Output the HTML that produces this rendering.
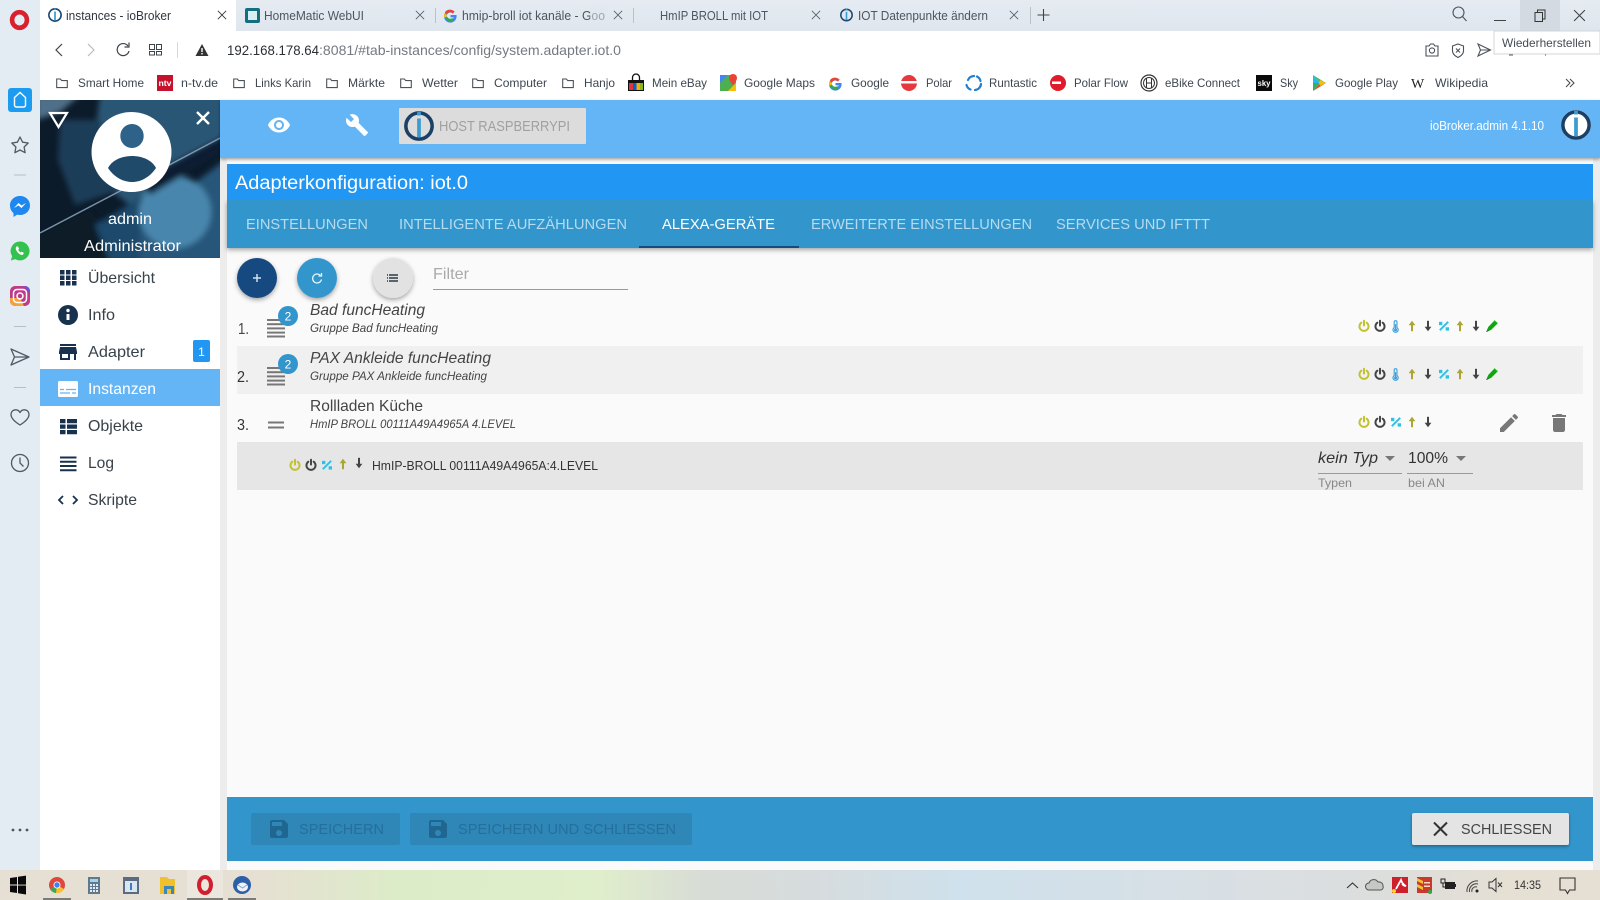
<!DOCTYPE html>
<html lang="de"><head><meta charset="utf-8"><title>instances - ioBroker</title>
<style>
html,body{margin:0;padding:0;width:1600px;height:900px;overflow:hidden;background:#fafafa}
svg{display:block;position:absolute;left:0;top:0}
text{font-family:"Liberation Sans",sans-serif;dominant-baseline:auto;white-space:pre}
.t{font-size:12.5px;fill:#4c5560}
.b{font-size:12px;fill:#3d4650}
.m{font-size:16px;fill:#38424a}
.tab{font-size:15px;fill:#b4dbef}
</style></head><body>
<svg width="1600" height="900" viewBox="0 0 1600 900" xmlns="http://www.w3.org/2000/svg">
<defs>
<linearGradient id="tb" x1="0" x2="0" y1="0" y2="1"><stop offset="0" stop-color="#e6ebf2"/><stop offset="1" stop-color="#dfe6ee"/></linearGradient>
<linearGradient id="task" x1="0" x2="1" y1="0" y2="0">
<stop offset="0" stop-color="#e6dfd3"/><stop offset=".155" stop-color="#e6dfd3"/><stop offset=".25" stop-color="#dcecc8"/><stop offset=".37" stop-color="#e0efcb"/><stop offset=".44" stop-color="#d8dcd6"/><stop offset=".51" stop-color="#d6dcde"/><stop offset=".6" stop-color="#cfe1ec"/><stop offset=".78" stop-color="#d9dfe3"/><stop offset=".86" stop-color="#dcdedd"/><stop offset=".95" stop-color="#e6dfd3"/><stop offset="1" stop-color="#e6dfd3"/></linearGradient>
<filter id="sh" x="-30%" y="-30%" width="160%" height="170%"><feDropShadow dx="0" dy="2" stdDeviation="2.5" flood-color="#000" flood-opacity=".35"/></filter>
<filter id="sh2" x="-5%" y="-30%" width="110%" height="170%"><feDropShadow dx="0" dy="1.5" stdDeviation="1.5" flood-color="#000" flood-opacity=".35"/></filter>
<filter id="bl" x="-10%" y="-10%" width="120%" height="120%"><feGaussianBlur stdDeviation="3"/></filter>
<clipPath id="hc"><rect x="40" y="100" width="180" height="158"/></clipPath>
<symbol id="pw" viewBox="0 0 14 14" overflow="visible"><path d="M3.9 3.1A5.3 5.3 0 1 0 10.1 3.1M7 .8v5.700" fill="none" stroke="currentColor" stroke-width="2.3" stroke-linecap="round"/></symbol>
<symbol id="up" viewBox="0 0 10 14" overflow="visible"><path d="M5 3v10.500" stroke="currentColor" stroke-width="2.500" fill="none"/><path d="M.8 6L5 .5 9.200 6z" fill="currentColor"/></symbol>
<symbol id="dn" viewBox="0 0 10 14" overflow="visible"><path d="M5 .5v10.500" stroke="currentColor" stroke-width="2.500" fill="none"/><path d="M.8 8L5 13.500 9.200 8z" fill="currentColor"/></symbol>
<symbol id="pc" viewBox="0 0 12 12" overflow="visible"><path d="M11 1L1 11" stroke="#2fc0e6" stroke-width="2.300" fill="none"/><rect x="0" y="1" width="4" height="4" fill="#2fc0e6"/><rect x="8" y="7.500" width="4" height="4" fill="#2fc0e6"/></symbol>
<symbol id="th" viewBox="0 0 10 16" overflow="visible"><path d="M3.400 9.200V2.600a1.700 1.700 0 0 1 3.400 0v6.600a3.200 3.200 0 1 1-3.400 0z" fill="none" stroke="#3aa3dd" stroke-width="1.400"/><circle cx="5.100" cy="12" r="1.900" fill="#3aa3dd"/><path d="M5.100 5v6" stroke="#3aa3dd" stroke-width="1.400"/></symbol>
<symbol id="pen" viewBox="0 0 14 14" overflow="visible"><path d="M0.200 14L2.600 8.200L9.600 .9L13.300 4.200L6 11.500z" fill="#0fa50f"/><path d="M.6 13.600L3.200 12" stroke="#0a7a0a" stroke-width="1"/><path d="M10 .2l3.900 3.500-.8.8-3.900-3.500z" fill="#1dc41d"/></symbol>
<symbol id="folder" viewBox="0 0 12 12" overflow="visible"><path d="M.7 2h3.700l1.300 1.600h5.600v7H.7z" fill="none" stroke="#4a525a" stroke-width="1.100"/></symbol>
<symbol id="x" viewBox="0 0 12 12" overflow="visible"><path d="M1 1L11 11M11 1L1 11" stroke="currentColor" stroke-width="1" fill="none"/></symbol>
<symbol id="io" viewBox="0 0 32 32" overflow="visible"><circle cx="16" cy="16" r="14" fill="none" stroke="currentColor" stroke-width="3.800"/><rect x="14" y="0.800" width="4" height="4" fill="#3d9ccf"/><rect x="14" y="8" width="4" height="20" fill="#3d9ccf"/></symbol>
<g id="gg"><path d="M456.500 15h-6v2.400h3.300a3.700 3.700 0 1 1-1-3.900l1.800-1.800a6.300 6.300 0 1 0 2 4.800z" fill="#4285f4"/><path d="M444.800 12.300l2.200 1.600a3.700 3.700 0 0 1 5.800-.4l1.800-1.800a6.300 6.300 0 0 0-9.800.6z" fill="#ea4335"/><path d="M444.800 18.200l2.200-1.600a3.700 3.700 0 0 0 5.400 1.500l1.800 1.600a6.300 6.300 0 0 1-9.400-1.500z" fill="#34a853"/><path d="M444.500 13.200l2.400 1.500-.1 1.700-2.300 1.600a6.300 6.300 0 0 1 0-4.800z" fill="#fbbc05"/></g>
<path id="savep" d="M17 3H5c-1.110 0-2 .9-2 2v14c0 1.100.89 2 2 2h14c1.100 0 2-.9 2-2V7l-4-4zm-5 16c-1.660 0-3-1.340-3-3s1.340-3 3-3 3 1.340 3 3-1.340 3-3 3zm3-10H5V5h10v4z"/>
</defs>

<rect width="1600" height="900" fill="#fafafa"/>

<!-- Opera sidebar -->
<rect x="0" y="0" width="40" height="870" fill="#e3ebf3"/>
<ellipse cx="19.500" cy="20" rx="7.400" ry="7.800" fill="none" stroke="#d9202f" stroke-width="4.600"/>
<rect x="8" y="88" width="24" height="24" rx="3" fill="#1c9cf0"/>
<path d="M14.500 97.500L20 92.500L25.500 97.500V105Q25.500 107 23.500 107H16.500Q14.500 107 14.500 105Z" fill="none" stroke="#fff" stroke-width="1.400"/>
<path d="M20 137l2.600 5.200 5.600.8-4.100 4 1 5.700-5.100-2.700-5.100 2.700 1-5.700-4.100-4 5.600-.8z" fill="none" stroke="#505a64" stroke-width="1.300" stroke-linejoin="round"/>
<rect x="14" y="174.500" width="12" height="1" fill="#b5bdc6"/>
<path d="M20 196c5.600 0 10 4 10 9.500s-4.400 9.500-10 9.500c-1 0-2-.1-2.900-.4L13.500 217v-3.900C11.400 211.400 10 208.700 10 205.500 10 200 14.400 196 20 196z" fill="#1e88f0"/>
<path d="M14 208l4.500-5 3 2.500 4.500-2.500-4.500 5-3-2.500z" fill="#fff"/>
<path d="M20 241.500a9.500 9.500 0 0 1 8.200 14.300a9.500 9.500 0 0 1-13 3.300L10.800 260.500l1.400-4.300A9.500 9.500 0 0 1 20 241.500z" fill="#32c24d"/>
<path d="M16.500 246.500c-1 1-1.200 3 .8 5.500s4.200 3.300 5.400 2.800l1.300-1.800-2.300-1.400-1 .9c-1-.4-2-1.500-2.500-2.700l.9-1-1.200-2.400z" fill="#fff"/>
<rect x="10" y="286" width="20" height="20" rx="5" fill="#c13a8a"/>
<path d="M10 298v3a5 5 0 0 0 5 5h9l-4-8z" fill="#f5a13c"/>
<path d="M15 286h10a5 5 0 0 1 5 5v3l-6-8z" fill="#6a56c9"/>
<rect x="13.500" y="289.500" width="13" height="13" rx="3.500" fill="none" stroke="#fff" stroke-width="1.500"/><circle cx="20" cy="296" r="3" fill="none" stroke="#fff" stroke-width="1.500"/>
<rect x="14" y="326" width="12" height="1" fill="#b5bdc6"/>
<path d="M11 349l18 8-18 8 3.500-8zM14.500 357H29" fill="none" stroke="#505a64" stroke-width="1.300" stroke-linejoin="round"/>
<rect x="14" y="387" width="12" height="1" fill="#b5bdc6"/>
<path d="M20 425c-8-5-9-8.500-9-10.500 0-5 6.500-6.500 9-2 2.500-4.500 9-3 9 2 0 2-1 5.500-9 10.500z" fill="none" stroke="#505a64" stroke-width="1.300" stroke-linejoin="round"/>
<circle cx="20" cy="463" r="8.500" fill="none" stroke="#505a64" stroke-width="1.300"/><path d="M20 457.500V463l3.500 3.500" fill="none" stroke="#505a64" stroke-width="1.300"/>
<circle cx="13" cy="830" r="1.400" fill="#4b5560"/><circle cx="20" cy="830" r="1.400" fill="#4b5560"/><circle cx="27" cy="830" r="1.400" fill="#4b5560"/>

<!-- Tab bar -->
<rect x="40" y="0" width="1560" height="31" fill="url(#tb)"/>
<rect x="1520" y="0" width="40" height="31" fill="#d3dae2"/>
<rect x="40" y="0" width="196" height="31" fill="#fff"/>
<use href="#io" x="48" y="8" width="14" height="14" color="#1d4a76"/>
<text x="66" y="20" class="t" style="fill:#30373e" textLength="105" lengthAdjust="spacingAndGlyphs">instances - ioBroker</text>
<use href="#x" x="217" y="10" width="10" height="10" color="#333"/>
<rect x="245" y="8" width="15" height="15" rx="2" fill="#136f80"/><rect x="248" y="11" width="9" height="9" fill="#d9eef0"/>
<text x="264" y="20" class="t" textLength="100" lengthAdjust="spacingAndGlyphs">HomeMatic WebUI</text>
<use href="#x" x="415" y="10" width="10" height="10" color="#56606a"/>
<rect x="435" y="8" width="1" height="15" fill="#b9c1ca"/>
<use href="#gg"/>
<text x="462" y="20" class="t" textLength="143" lengthAdjust="spacingAndGlyphs">hmip-broll iot kanäle - Goo</text>
<rect x="590" y="6" width="18" height="20" fill="#e2e8ef" opacity=".55"/>
<use href="#x" x="613" y="10" width="10" height="10" color="#56606a"/>
<rect x="633" y="8" width="1" height="15" fill="#b9c1ca"/>
<text x="660" y="20" class="t" textLength="108" lengthAdjust="spacingAndGlyphs">HmIP BROLL mit IOT</text>
<use href="#x" x="811" y="10" width="10" height="10" color="#56606a"/>
<use href="#io" x="840" y="8" width="13" height="14" color="#1d4a76"/>
<text x="858" y="20" class="t" textLength="130" lengthAdjust="spacingAndGlyphs">IOT Datenpunkte ändern</text>
<use href="#x" x="1009" y="10" width="10" height="10" color="#56606a"/>
<rect x="1030" y="7" width="1" height="17" fill="#b9c1ca"/>
<path d="M1043.500 9v12M1037.500 15h12" stroke="#444" stroke-width="1.100"/>
<circle cx="1458.500" cy="12.500" r="5.500" fill="none" stroke="#4a525a" stroke-width="1.100"/><path d="M1462.500 16.500l4 4.500" stroke="#4a525a" stroke-width="1.100"/>
<rect x="1494" y="20" width="12" height="1" fill="#444"/>
<path d="M1535 12.500h7.500v9H1535zM1537.500 12.500V10h7.500v9h-2.500" fill="none" stroke="#333" stroke-width="1"/>
<use href="#x" x="1573" y="9" width="13" height="13" color="#444"/>

<!-- Address bar -->
<rect x="40" y="31" width="1560" height="69" fill="#fff"/>
<path d="M62 44l-6 6 6 6" fill="none" stroke="#3c444c" stroke-width="1.200"/>
<path d="M88 44l6 6-6 6" fill="none" stroke="#b5bbc2" stroke-width="1.200"/>
<path d="M128 46a6 6 0 1 0 1 5" fill="none" stroke="#3c444c" stroke-width="1.200"/><path d="M129 42.500v4.500h-4.500" fill="none" stroke="#3c444c" stroke-width="1.200"/>
<g fill="none" stroke="#3c444c" stroke-width="1"><rect x="149.500" y="44.500" width="5" height="5"/><rect x="156.500" y="44.500" width="5" height="5"/><rect x="149.500" y="51.500" width="5" height="3.500"/><rect x="156.500" y="51.500" width="5" height="3.500"/></g>
<rect x="177" y="42" width="1" height="16" fill="#d5d9de"/>
<path d="M202 44l6.500 12h-13z" fill="#333"/><rect x="201.300" y="48" width="1.400" height="4" fill="#fff"/><rect x="201.300" y="53" width="1.400" height="1.400" fill="#fff"/>
<text x="227" y="55" font-size="14" fill="#2b3036" textLength="92" lengthAdjust="spacingAndGlyphs">192.168.178.64</text>
<text x="319" y="55" font-size="14" fill="#737a82" textLength="302" lengthAdjust="spacingAndGlyphs">:8081/#tab-instances/config/system.adapter.iot.0</text>
<g fill="none" stroke="#4a525a" stroke-width="1.100">
<path d="M1426 46h3l1.500-2h3l1.500 2h3v10h-12z"/><circle cx="1432" cy="50.500" r="2.600"/>
<path d="M1458 44l5.500 2v5c0 3-2.500 5-5.500 6.500-3-1.500-5.500-3.500-5.500-6.500v-5z"/><path d="M1456 48.500l4 4M1460 48.500l-4 4"/>
<path d="M1478 44l12.500 6-12.500 6 2.500-6zM1480.500 50h10"/></g>
<rect x="1494" y="31" width="106" height="23" fill="#fff" stroke="#d0d4d8" stroke-width="1"/>
<text x="1502" y="47" font-size="12" fill="#444c54" textLength="89" lengthAdjust="spacingAndGlyphs">Wiederherstellen</text>
<path d="M1509 55h4M1545 55h1" stroke="#555"/>

<!-- Bookmarks -->
<use href="#folder" x="56" y="77" width="12" height="12"/>
<text x="78" y="87" class="b" textLength="66" lengthAdjust="spacingAndGlyphs">Smart Home</text>
<rect x="157" y="75" width="16" height="16" fill="#c5112c"/><text x="158.500" y="86" font-size="8" font-weight="700" fill="#fff" textLength="13" lengthAdjust="spacingAndGlyphs">ntv</text>
<text x="181" y="87" class="b" textLength="37" lengthAdjust="spacingAndGlyphs">n-tv.de</text>
<use href="#folder" x="233" y="77" width="12" height="12"/>
<text x="255" y="87" class="b" textLength="56" lengthAdjust="spacingAndGlyphs">Links Karin</text>
<use href="#folder" x="326" y="77" width="12" height="12"/>
<text x="348" y="87" class="b" textLength="37" lengthAdjust="spacingAndGlyphs">Märkte</text>
<use href="#folder" x="400" y="77" width="12" height="12"/>
<text x="422" y="87" class="b" textLength="36" lengthAdjust="spacingAndGlyphs">Wetter</text>
<use href="#folder" x="472" y="77" width="12" height="12"/>
<text x="494" y="87" class="b" textLength="53" lengthAdjust="spacingAndGlyphs">Computer</text>
<use href="#folder" x="562" y="77" width="12" height="12"/>
<text x="584" y="87" class="b" textLength="31" lengthAdjust="spacingAndGlyphs">Hanjo</text>
<path d="M628 80h16v11h-16z" fill="#111"/><rect x="629" y="83" width="4" height="7" fill="#e53238"/><rect x="633" y="83" width="3.500" height="7" fill="#0064d2"/><rect x="636.500" y="83" width="3.500" height="7" fill="#f5af02"/><rect x="640" y="83" width="3" height="7" fill="#86b817"/><path d="M632.500 80v-2.500a3.500 3.500 0 0 1 7 0V80" fill="none" stroke="#111" stroke-width="1.300"/>
<text x="652" y="87" class="b" textLength="55" lengthAdjust="spacingAndGlyphs">Mein eBay</text>
<rect x="720" y="75" width="16" height="16" fill="#4caf50"/><path d="M720 75h8l-8 8z" fill="#4285f4"/><path d="M736 75v8l-8 8h8z" fill="#fbbc05"/><path d="M733 74a4 4 0 0 0-4 4c0 3 4 7 4 7s4-4 4-7a4 4 0 0 0-4-4z" fill="#ea4335"/>
<text x="744" y="87" class="b" textLength="71" lengthAdjust="spacingAndGlyphs">Google Maps</text>
<use href="#gg" x="385" y="68"/>
<text x="851" y="87" class="b" textLength="38" lengthAdjust="spacingAndGlyphs">Google</text>
<circle cx="909" cy="83" r="8" fill="#e5383f"/><rect x="901" y="81" width="16" height="2.500" fill="#fff"/>
<text x="926" y="87" class="b" textLength="26" lengthAdjust="spacingAndGlyphs">Polar</text>
<path d="M968 80a6.500 6.500 0 0 1 6-4M981 84a6.500 6.500 0 0 1-6 6M966.500 85a6.500 6.500 0 0 0 4 4.500M977 76.500a6.500 6.500 0 0 1 3.500 4.500" fill="none" stroke="#1f7fd1" stroke-width="2.200" stroke-linecap="round"/>
<text x="989" y="87" class="b" textLength="48" lengthAdjust="spacingAndGlyphs">Runtastic</text>
<circle cx="1058" cy="83" r="8" fill="#e01b2c"/><rect x="1052" y="81.500" width="9" height="2.500" fill="#fff"/>
<text x="1074" y="87" class="b" textLength="54" lengthAdjust="spacingAndGlyphs">Polar Flow</text>
<circle cx="1149" cy="83" r="8" fill="none" stroke="#333" stroke-width="1.200"/><circle cx="1149" cy="83" r="5.500" fill="none" stroke="#333" stroke-width="1"/><path d="M1146.500 78.500v9M1151.500 78.500v9M1146.500 83h5" stroke="#333" stroke-width="1"/>
<text x="1165" y="87" class="b" textLength="75" lengthAdjust="spacingAndGlyphs">eBike Connect</text>
<rect x="1256" y="75" width="16" height="16" fill="#0a0a0a"/><text x="1257.500" y="86" font-size="8" font-weight="700" fill="#fff" textLength="13" lengthAdjust="spacingAndGlyphs">sky</text>
<text x="1280" y="87" class="b" textLength="18" lengthAdjust="spacingAndGlyphs">Sky</text>
<path d="M1313 75v8l7 0z" fill="#2bb5ee"/><path d="M1313 91v-8l7 0z" fill="#2db45c"/><path d="M1313 75l13 8h-6z" fill="#38c172"/><path d="M1313 91l13-8h-6z" fill="#ea4335"/><path d="M1320 80l6 3-6 3-1-3z" fill="#fbbc05"/>
<text x="1335" y="87" class="b" textLength="63" lengthAdjust="spacingAndGlyphs">Google Play</text>
<text x="1411" y="88" font-size="14" fill="#222" style="font-family:'Liberation Serif',serif">W</text>
<text x="1435" y="87" class="b" textLength="53" lengthAdjust="spacingAndGlyphs">Wikipedia</text>
<path d="M1566 79l4 4-4 4M1570 79l4 4-4 4" fill="none" stroke="#444" stroke-width="1"/>

<!-- Drawer -->
<rect x="40" y="100" width="180" height="770" fill="#fff"/>
<rect x="220" y="158" width="7" height="712" fill="#ececec"/>
<rect x="1593" y="158" width="7" height="712" fill="#ececec"/>
<g clip-path="url(#hc)">
<rect x="40" y="100" width="180" height="158" fill="#0c1b2a"/>
<g filter="url(#bl)">
<path d="M100 95H225V145L130 205L90 175Z" fill="#2c5676"/>
<path d="M60 120H100L120 190L75 205L58 160Z" fill="#1b3c58"/>
<path d="M36 95H80L60 112L36 120Z" fill="#4f6f88"/>
<path d="M90 262L225 160V262Z" fill="#25567a"/>
<path d="M36 262V238L90 210L130 262Z" fill="#0a1a28"/>
<path d="M95 225L140 198V262H110Z" fill="#1c4a6c"/>
<circle cx="175" cy="212" r="36" fill="#4a86ad"/>
<path d="M140 180L225 135V150L150 195Z" fill="#0d1f30"/>
</g>
<path d="M40 233L122 190L222 137" stroke="#8ea6b8" stroke-width="1.500" fill="none" opacity=".85"/>
</g>
<circle cx="131.500" cy="152" r="40" fill="#fff"/>
<ellipse cx="132" cy="136" rx="11.700" ry="12" fill="#2e6288"/>
<path d="M108 168C116 152 148 152 156 168C150 177 141 182 132 182C123 182 114 177 108 168Z" fill="#1f4a6a"/>
<path d="M50 113h17l-8.500 14z" fill="none" stroke="#fff" stroke-width="2.200"/>
<path d="M197 112l12 12M209 112l-12 12" stroke="#fff" stroke-width="2.400"/>
<text x="130" y="224" text-anchor="middle" font-size="16" fill="#fff" textLength="44" lengthAdjust="spacingAndGlyphs">admin</text>
<text x="84" y="251" font-size="16" fill="#fff" textLength="97" lengthAdjust="spacingAndGlyphs">Administrator</text>

<rect x="40" y="369" width="180" height="37" fill="#64b5f6"/>
<g fill="#18314f">
<path d="M60 270h4.500v4.500H60zM66 270h4.500v4.500H66zM72 270h4.500v4.500H72zM60 275.500h4.500v4.500H60zM66 275.500h4.500v4.500H66zM72 275.500h4.500v4.500H72zM60 281h4.500v4.500H60zM66 281h4.500v4.500H66zM72 281h4.500v4.500H72z"/>
<circle cx="68" cy="315" r="10"/>
<path transform="translate(56,340)" d="M20 4H4v2h16V4zm1 10v-2l-1-5H4l-1 5v2h1v6h10v-6h4v6h2v-6h1zm-9 4H6v-4h6v4z"/>
<path d="M60 419h5.500v4.300H60zM67 419h10v4.300H67zM60 424.500h5.500v4.300H60zM67 424.500h10v4.300H67zM60 430h5.500v4.300H60zM67 430h10v4.300H67z"/>
<path d="M60 456.500h16.500v2H60zM60 460.800h16.500v2H60zM60 465h16.500v2H60zM60 469.300h16.500v2H60z"/>
</g>
<rect x="66.500" y="314" width="3" height="6" fill="#fff"/><circle cx="68" cy="310.500" r="1.700" fill="#fff"/>
<path d="M63 496l-4 4 4 4M73 496l4 4-4 4" fill="none" stroke="#18314f" stroke-width="1.800"/>
<rect x="58" y="381" width="20" height="16" rx="1.500" fill="#fff"/><path d="M60 389.500h4M66 389.500h10M60 393h10M72 393h4" stroke="#64b5f6" stroke-width="1.300"/>
<text x="88" y="283" class="m" textLength="67" lengthAdjust="spacingAndGlyphs">Übersicht</text>
<text x="88" y="320" class="m" textLength="27" lengthAdjust="spacingAndGlyphs">Info</text>
<text x="88" y="357" class="m" textLength="57" lengthAdjust="spacingAndGlyphs">Adapter</text>
<text x="88" y="394" class="m" style="fill:#fff" textLength="68" lengthAdjust="spacingAndGlyphs">Instanzen</text>
<text x="88" y="431" class="m" textLength="55" lengthAdjust="spacingAndGlyphs">Objekte</text>
<text x="88" y="468" class="m" textLength="26" lengthAdjust="spacingAndGlyphs">Log</text>
<text x="88" y="505" class="m" textLength="49" lengthAdjust="spacingAndGlyphs">Skripte</text>
<rect x="193" y="340" width="17" height="22" rx="2" fill="#2196f3"/><text x="201.500" y="356" text-anchor="middle" font-size="12" fill="#fff">1</text>

<!-- Header -->
<rect x="220" y="100" width="1380" height="58" fill="#64b5f6" filter="url(#sh2)"/>
<path transform="translate(267,113)" fill="#fff" d="M12 4.500C7 4.500 2.730 7.610 1 12c1.730 4.390 6 7.500 11 7.500s9.270-3.110 11-7.500c-1.730-4.390-6-7.500-11-7.500zM12 17c-2.760 0-5-2.240-5-5s2.240-5 5-5 5 2.240 5 5-2.240 5-5 5zm0-8c-1.660 0-3 1.340-3 3s1.340 3 3 3 3-1.340 3-3-1.340-3-3-3z"/>
<path transform="translate(345,113)" fill="#fff" d="M22.700 19l-9.100-9.100c.9-2.300.4-5-1.500-6.900-2-2-5-2.400-7.400-1.300L9 6 6 9 1.600 4.700C.4 7.100.9 10.100 2.900 12.100c1.900 1.900 4.600 2.400 6.900 1.500l9.100 9.100c.4.400 1 .4 1.400 0l2.300-2.300c.5-.4.5-1.100.1-1.400z"/>
<rect x="399" y="108" width="187" height="36" rx="1" fill="#dcdcdc"/>
<use href="#io" x="404" y="110" width="30" height="32" color="#1c3f66"/>
<text x="439" y="131" font-size="14.500" fill="#a0a0a0" textLength="131" lengthAdjust="spacingAndGlyphs">HOST RASPBERRYPI</text>
<text x="1430" y="130" font-size="12.500" fill="#fff" textLength="114" lengthAdjust="spacingAndGlyphs">ioBroker.admin 4.1.10</text>
<circle cx="1576" cy="125" r="15" fill="#fff"/>
<use href="#io" x="1561" y="109" width="30" height="32" color="#1c3f66"/>

<!-- Panel header -->
<rect x="227" y="200" width="1366" height="48" fill="#3296cc" filter="url(#sh)"/>
<rect x="227" y="164" width="1366" height="36" fill="#2196f3"/>
<text x="235" y="189" font-size="19" fill="#fff" textLength="233" lengthAdjust="spacingAndGlyphs">Adapterkonfiguration: iot.0</text>
<text x="246" y="229" class="tab" textLength="122" lengthAdjust="spacingAndGlyphs">EINSTELLUNGEN</text>
<text x="399" y="229" class="tab" textLength="228" lengthAdjust="spacingAndGlyphs">INTELLIGENTE AUFZÄHLUNGEN</text>
<text x="662" y="229" class="tab" style="fill:#fff" textLength="113" lengthAdjust="spacingAndGlyphs">ALEXA-GERÄTE</text>
<text x="811" y="229" class="tab" textLength="221" lengthAdjust="spacingAndGlyphs">ERWEITERTE EINSTELLUNGEN</text>
<text x="1056" y="229" class="tab" textLength="154" lengthAdjust="spacingAndGlyphs">SERVICES UND IFTTT</text>
<rect x="639" y="246" width="160" height="2" fill="#174a7f"/>

<!-- Toolbar -->
<circle cx="257" cy="278" r="20" fill="#174a7f" filter="url(#sh)"/>
<path d="M253 278h8M257 274v8" stroke="#cfe0ee" stroke-width="1.500"/>
<circle cx="317" cy="278" r="20" fill="#3296cc" filter="url(#sh)"/>
<path d="M320.500 275.500a4.500 4.500 0 1 0 1 4" fill="none" stroke="#e4f2fa" stroke-width="1.300"/><path d="M321.500 273v3h-3" fill="none" stroke="#e4f2fa" stroke-width="1.300"/>
<circle cx="393" cy="278" r="20" fill="#e2e2e2" filter="url(#sh)"/>
<path d="M389 275h9M389 278h9M389 281h9" stroke="#2e3a44" stroke-width="1.500"/><path d="M387 275h1M387 278h1M387 281h1" stroke="#2e3a44" stroke-width="1.500"/>
<text x="433" y="279" font-size="16" fill="#aaa" textLength="36" lengthAdjust="spacingAndGlyphs">Filter</text>
<rect x="433" y="289" width="195" height="1" fill="#999"/>

<!-- Rows -->
<rect x="237" y="346" width="1346" height="48" fill="#f0f0f0"/>
<rect x="237" y="442" width="1346" height="48" fill="#e6e6e6"/>
<text x="238" y="334" font-size="16" fill="#444" textLength="11" lengthAdjust="spacingAndGlyphs">1.</text>
<text x="237" y="382" font-size="16" fill="#333" textLength="12" lengthAdjust="spacingAndGlyphs">2.</text>
<text x="237" y="430" font-size="16" fill="#333" textLength="12" lengthAdjust="spacingAndGlyphs">3.</text>
<g fill="#777">
<rect x="267" y="319" width="18" height="2"/><rect x="267" y="323.200" width="18" height="2"/><rect x="267" y="327.400" width="18" height="2"/><rect x="267" y="331.600" width="18" height="2"/><rect x="267" y="335.500" width="18" height="2"/>
<rect x="267" y="367" width="18" height="2"/><rect x="267" y="371.200" width="18" height="2"/><rect x="267" y="375.400" width="18" height="2"/><rect x="267" y="379.600" width="18" height="2"/><rect x="267" y="383.500" width="18" height="2"/>
<rect x="268" y="421.500" width="16" height="2"/><rect x="268" y="426.500" width="16" height="2"/>
</g>
<circle cx="288" cy="316" r="10" fill="#3296cc"/><text x="288" y="320.500" text-anchor="middle" font-size="12" fill="#fff">2</text>
<circle cx="288" cy="364" r="10" fill="#3296cc"/><text x="288" y="368.500" text-anchor="middle" font-size="12" fill="#fff">2</text>
<text x="310" y="315" font-size="16" font-style="italic" fill="#444" textLength="115" lengthAdjust="spacingAndGlyphs">Bad funcHeating</text>
<text x="310" y="332" font-size="12" font-style="italic" fill="#444" textLength="128" lengthAdjust="spacingAndGlyphs">Gruppe Bad funcHeating</text>
<text x="310" y="363" font-size="16" font-style="italic" fill="#444" textLength="181" lengthAdjust="spacingAndGlyphs">PAX Ankleide funcHeating</text>
<text x="310" y="380" font-size="12" font-style="italic" fill="#444" textLength="177" lengthAdjust="spacingAndGlyphs">Gruppe PAX Ankleide funcHeating</text>
<text x="310" y="411" font-size="16" fill="#444" textLength="113" lengthAdjust="spacingAndGlyphs">Rollladen Küche</text>
<text x="310" y="428" font-size="12" font-style="italic" fill="#444" textLength="206" lengthAdjust="spacingAndGlyphs">HmIP BROLL 00111A49A4965A 4.LEVEL</text>

<!-- Row icons -->
<g color="#c4c031"><use href="#pw" x="1358" y="320" width="12" height="12"/><use href="#pw" x="1358" y="368" width="12" height="12"/><use href="#pw" x="1358" y="416" width="12" height="12"/><use href="#pw" x="289" y="459" width="12" height="12"/></g>
<g color="#a9a631"><use href="#up" x="1408" y="320" width="8" height="12"/><use href="#up" x="1456" y="320" width="8" height="12"/>
<use href="#up" x="1408" y="368" width="8" height="12"/><use href="#up" x="1456" y="368" width="8" height="12"/>
<use href="#up" x="1408" y="416" width="8" height="12"/>
<use href="#up" x="339" y="458" width="8" height="12"/></g>
<g color="#444"><use href="#pw" x="1374" y="320" width="12" height="12"/><use href="#dn" x="1424" y="320" width="8" height="12"/><use href="#dn" x="1472" y="320" width="8" height="12"/>
<use href="#pw" x="1374" y="368" width="12" height="12"/><use href="#dn" x="1424" y="368" width="8" height="12"/><use href="#dn" x="1472" y="368" width="8" height="12"/>
<use href="#pw" x="1374" y="416" width="12" height="12"/><use href="#dn" x="1424" y="416" width="8" height="12"/>
<use href="#pw" x="305" y="459" width="12" height="12"/><use href="#dn" x="355" y="457" width="8" height="12"/></g>
<use href="#th" x="1391" y="320" width="9" height="13"/><use href="#th" x="1391" y="368" width="9" height="13"/>
<use href="#pc" x="1439" y="321" width="10" height="10"/><use href="#pc" x="1439" y="369" width="10" height="10"/>
<use href="#pc" x="1391" y="417" width="10" height="10"/><use href="#pc" x="322" y="460" width="10" height="10"/>
<use href="#pen" x="1486" y="320" width="12" height="12"/><use href="#pen" x="1486" y="368" width="12" height="12"/>

<path transform="translate(1497,411)" fill="#777" d="M3 17.250V21h3.750L17.810 9.940l-3.750-3.750L3 17.250zM20.710 7.040c.39-.39.39-1.020 0-1.410l-2.340-2.340c-.39-.39-1.020-.39-1.410 0l-1.830 1.830 3.750 3.750 1.830-1.830z"/>
<path transform="translate(1547,411)" fill="#777" d="M6 19c0 1.100.9 2 2 2h8c1.100 0 2-.9 2-2V7H6v12zM19 4h-3.500l-1-1h-5l-1 1H5v2h14V4z"/>

<text x="372" y="470" font-size="13" fill="#333" textLength="226" lengthAdjust="spacingAndGlyphs">HmIP-BROLL 00111A49A4965A:4.LEVEL</text>

<text x="1318" y="463" font-size="16" font-style="italic" fill="#333" textLength="60" lengthAdjust="spacingAndGlyphs">kein Typ</text>
<path d="M1385 456h10l-5 5z" fill="#777"/>
<rect x="1318" y="473" width="84" height="1" fill="#999"/>
<text x="1318" y="487" font-size="12" fill="#888" textLength="34" lengthAdjust="spacingAndGlyphs">Typen</text>
<text x="1408" y="463" font-size="16" fill="#333" textLength="40" lengthAdjust="spacingAndGlyphs">100%</text>
<path d="M1456 456h10l-5 5z" fill="#777"/>
<rect x="1407" y="473" width="66" height="1" fill="#999"/>
<text x="1408" y="487" font-size="12" fill="#888" textLength="37" lengthAdjust="spacingAndGlyphs">bei AN</text>

<!-- Footer -->
<rect x="227" y="797" width="1366" height="64" fill="#3296cc"/>
<rect x="251" y="813" width="149" height="32" rx="2" fill="#2f87b8"/>
<rect x="410" y="813" width="282" height="32" rx="2" fill="#2f87b8"/>
<g fill="#1f6690"><use href="#savep" x="0" y="0" transform="translate(267,817)"/><use href="#savep" transform="translate(426,817)"/></g>
<text x="299" y="834" font-size="15" fill="#246f9c" textLength="85" lengthAdjust="spacingAndGlyphs">SPEICHERN</text>
<text x="458" y="834" font-size="15" fill="#246f9c" textLength="218" lengthAdjust="spacingAndGlyphs">SPEICHERN UND SCHLIESSEN</text>
<rect x="1412" y="813" width="157" height="32" rx="2" fill="#e4e4e4" filter="url(#sh2)"/>
<path d="M1434 822.500l13 13M1447 822.500l-13 13" stroke="#333" stroke-width="2"/>
<text x="1461" y="834" font-size="15" fill="#444" textLength="91" lengthAdjust="spacingAndGlyphs">SCHLIESSEN</text>

<!-- Taskbar -->
<rect x="0" y="870" width="1600" height="30" fill="url(#task)"/>
<rect x="187" y="870" width="36" height="30" fill="#ece7de"/>
<rect x="43" y="898" width="28" height="2" fill="#7b7b78"/><rect x="187" y="898" width="36" height="2" fill="#7b7b78"/><rect x="228" y="898" width="28" height="2" fill="#7b7b78"/>
<path d="M10 878l7-1v7.500h-7zM18 876.800l8-1.200v9h-8zM10 885.500h7v7.500l-7-1zM18 885.500h8v9l-8-1.200z" fill="#0a0a0a"/>
<circle cx="57" cy="885" r="8" fill="#e0463a"/><path d="M57 885l-7 4a8 8 0 0 0 6 4z" fill="#38a853"/><path d="M57 885l7 4a8 8 0 0 1-8 4z" fill="#f6c12f"/><circle cx="57" cy="885" r="3.500" fill="#fff"/><circle cx="57" cy="885" r="2.700" fill="#3e80ef"/>
<rect x="88" y="877" width="12" height="17" fill="#5f7a90"/><rect x="90" y="879" width="8" height="3" fill="#a8d1e8"/><path d="M90 884h2v2h-2zM93 884h2v2h-2zM96 884h2v2h-2zM90 887h2v2h-2zM93 887h2v2h-2zM96 887h2v2h-2zM90 890h2v2h-2zM93 890h2v2h-2zM96 890h2v2h-2z" fill="#e5ebf0"/>
<rect x="123" y="877" width="16" height="17" fill="#5a6c84"/><rect x="125" y="881" width="12" height="11" fill="#d8e6f2"/><rect x="130" y="883" width="2" height="7" fill="#3a7dc0"/>
<path d="M160 877h7l2 2h6v15h-15z" fill="#f1c02f"/><rect x="164" y="886" width="10" height="8" fill="#3a87b8"/><rect x="167" y="889" width="4" height="5" fill="#f1c02f"/>
<ellipse cx="205" cy="885" rx="6" ry="8" fill="none" stroke="#d21f2e" stroke-width="4"/>
<circle cx="242" cy="885" r="9" fill="#2b5fa8"/><ellipse cx="242.500" cy="887" rx="5.500" ry="4.500" fill="#eef2f8"/><path d="M238 885l4.500 3 4.500-3" fill="none" stroke="#8aa3c4" stroke-width="1"/>
<path d="M1347 888l5.500-5 5.500 5" fill="none" stroke="#333" stroke-width="1.100"/>
<path d="M1369 890a3.500 3.500 0 0 1 0-7a5 5 0 0 1 9-1a4 4 0 0 1 5 4a3 3 0 0 1-2 4z" fill="#c7c7c4" stroke="#555" stroke-width="1"/>
<rect x="1392" y="877" width="16" height="16" fill="#d01f2c"/><path d="M1396 889c2-4 4-7 5-9 1 3 3 5 5 6-2 0-3-1-4-2" fill="none" stroke="#fff" stroke-width="1.800"/><circle cx="1394" cy="891" r="2" fill="#f3d92c"/>
<rect x="1417" y="877" width="15" height="16" fill="#c83b2b"/><path d="M1417 878l6 3 0 3-6-3zM1417 884l6 3 0 3-6-3z" fill="#f1c531"/><rect x="1424" y="882" width="6" height="1.500" fill="#f5d5c8"/><rect x="1424" y="885.500" width="6" height="1.500" fill="#f5d5c8"/><circle cx="1430" cy="892" r="2" fill="#2da84a"/>
<rect x="1445" y="882" width="10" height="7" fill="#222"/><rect x="1441" y="879" width="4" height="4" fill="none" stroke="#222"/><rect x="1455" y="884" width="1" height="3" fill="#222"/><path d="M1443 883v4h2" fill="none" stroke="#222"/>
<path d="M1467 892a10 10 0 0 1 11-11M1469.500 892a7 7 0 0 1 8.500-8M1472 892a4 4 0 0 1 5-5" fill="none" stroke="#444" stroke-width="1"/><circle cx="1477" cy="891" r="1.500" fill="#222"/>
<path d="M1489 882h3l4-3.500v13L1492 888h-3zM1498 882.500l4 4.500M1502 882.500l-4 4.500" fill="none" stroke="#333" stroke-width="1"/>
<text x="1514" y="889" font-size="12" fill="#333" textLength="27" lengthAdjust="spacingAndGlyphs">14:35</text>
<path d="M1560 878h15v12h-5.500l-2 3.500-2-3.500H1560z" fill="none" stroke="#333" stroke-width="1.100"/>
</svg>
</body></html>
